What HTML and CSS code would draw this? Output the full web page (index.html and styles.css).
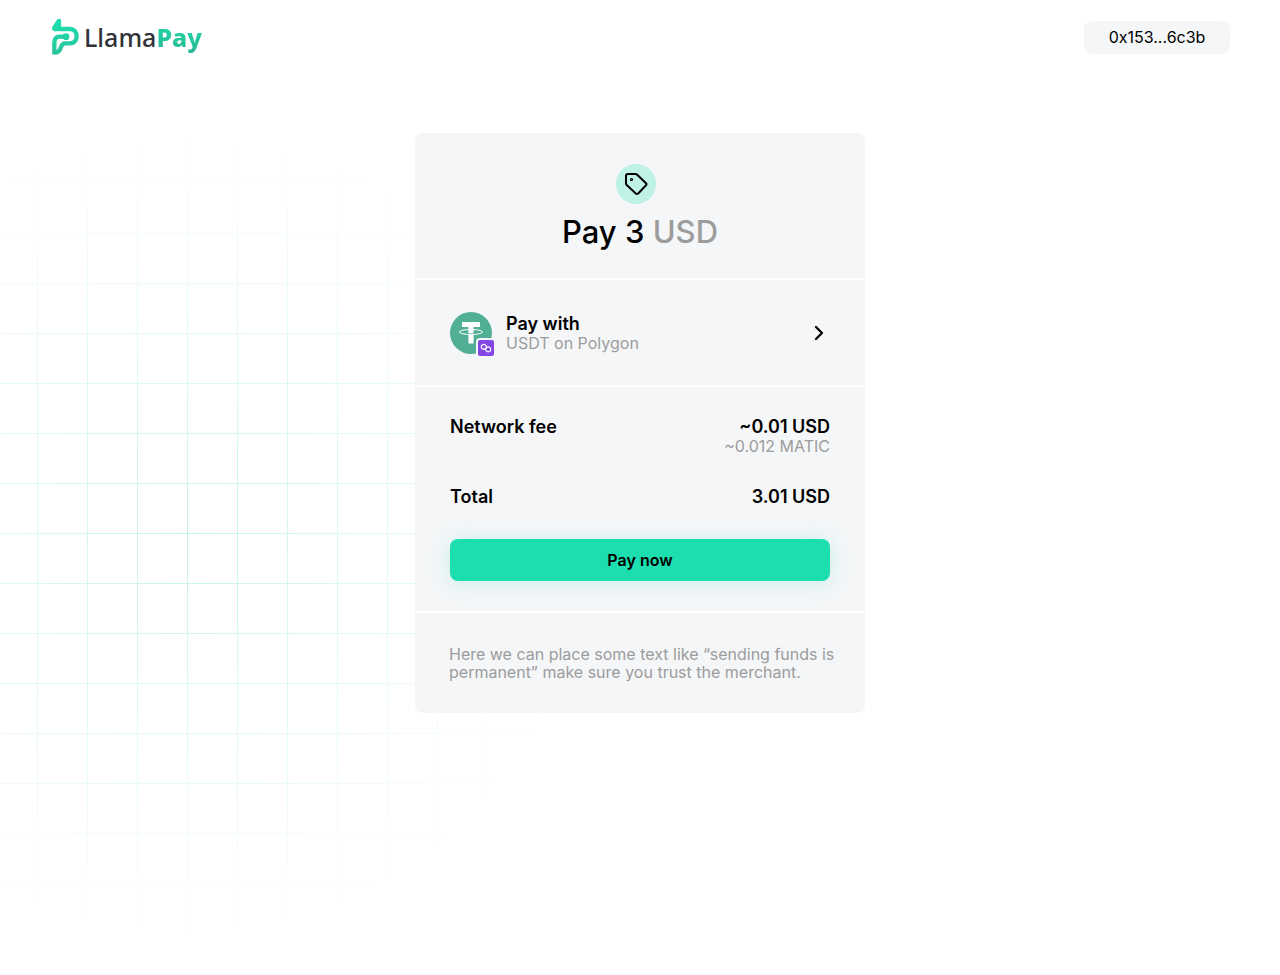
FILE: index.html
```html
<!DOCTYPE html>
<html lang="en">
<head>
<meta charset="utf-8">
<meta name="viewport" content="width=device-width, initial-scale=1">
<title>LlamaPay</title>
<link rel="stylesheet" href="styles.css">
</head>
<body>
<header class="topbar">
  <a class="brand" href="#" aria-label="LlamaPay">
    <svg class="brand-mark" viewBox="21 12 81 108" aria-hidden="true">
      <defs>
        <linearGradient id="mint" x1="0" y1="12" x2="0" y2="120" gradientUnits="userSpaceOnUse">
          <stop offset="0" stop-color="#1be0b0"/><stop offset="1" stop-color="#2bc39b"/>
        </linearGradient>
      </defs>
      <path fill="url(#mint)" d="M21 40Q21 35 26 29L37 13Q42 7 47 13Q49 18 48 36H73V47H26Q21 47 21 40Z"/>
      <path fill="none" stroke="url(#mint)" stroke-width="13" stroke-linejoin="round" d="M27 42H74C88 42 95 52 95 64C95 77 87 85 75 85H60C51 85 50 91 47 99C44 108 37 113 28 113V84C28 70 34 65 44 65H62"/>
      <circle cx="63" cy="65" r="10" fill="url(#mint)"/>
    </svg>
    <span class="brand-name">Llama<b>Pay</b></span>
  </a>
  <button class="account" type="button">0x153...6c3b</button>
</header>
<main class="page">
  <section class="card">
    <div class="summary">
      <span class="tag">
        <svg viewBox="0 0 24 24" width="24" height="24" fill="none" stroke="#000" stroke-width="2" stroke-linejoin="round" aria-hidden="true">
          <path d="M4 2H11.500Q12.500 2 13.200 2.700L22 11.200Q23 12.200 22 13.200L14.200 21.500Q13 22.500 11.800 21.500L2.700 13Q2 12.200 2 11.500V4Q2 2 4 2Z"/>
          <circle cx="7.500" cy="7.500" r=".6"/>
        </svg>
      </span>
      <h1 class="amount">Pay 3 <span class="muted">USD</span></h1>
    </div>
    <button class="method" type="button">
      <span class="token">
        <svg viewBox="0 0 42 42" width="42" height="42" aria-hidden="true">
          <circle cx="21" cy="21" r="21" fill="#50af95"/>
          <ellipse cx="21" cy="20" rx="11.500" ry="2.500" fill="none" stroke="#fff" stroke-width="1"/>
          <path fill="#fff" d="M12 10H30V15H23.600V31.500H18.400V15H12Z"/>
          <path d="M17 21.300Q21 21.800 25 21.300" fill="none" stroke="#50af95" stroke-width=".7"/>
        </svg>
        <svg class="chain" viewBox="0 0 16 16" width="16" height="16" aria-hidden="true">
          <path fill="none" stroke="#fff" stroke-width="1.100" stroke-linejoin="round" stroke-linecap="round" d="M8.200 7.900V5.600L5.700 4.200L3.400 5.500V8.100L5.700 9.400L10.200 6.800L12.600 8.100V10.800L10.200 12.100L7.900 10.800V8.100"/>
        </svg>
      </span>
      <span class="method-text">
        <span class="strong">Pay with</span>
        <span class="sub">USDT on Polygon</span>
      </span>
      <svg class="chevron" viewBox="0 0 24 24" width="24" height="24" fill="none" stroke="#000" stroke-width="2.300" stroke-linecap="round" stroke-linejoin="round" aria-hidden="true"><path d="M10 6l6 6-6 6"/></svg>
    </button>
    <div class="details">
      <dl class="costs">
        <div class="row">
          <dt>Network fee</dt>
          <dd>~0.01 USD<span class="sub">~0.012 MATIC</span></dd>
        </div>
        <div class="row">
          <dt>Total</dt>
          <dd>3.01 USD</dd>
        </div>
      </dl>
      <button class="pay" type="button">Pay now</button>
    </div>
    <p class="note">Here we can place some text like “sending funds is permanent” make sure you trust the merchant.</p>
  </section>
</main>
</body>
</html>
```
FILE: styles.css
```css
* { box-sizing: border-box; }

body {
  position: relative;
  min-height: 100vh;
  margin: 0;
  background: #fff;
  color: #000;
  font-family: Inter, "Liberation Sans", sans-serif;
  font-size: 16px;
}

/* Faded grid behind the card */
body::before {
  content: "";
  position: absolute;
  inset: 0;
  z-index: -1;
  background-image:
    linear-gradient(to right, #c4f5e9 1px, transparent 1px),
    linear-gradient(to bottom, #c4f5e9 1px, transparent 1px);
  background-size: 50px 50px;
  background-position: 37px 33px;
  mask-image: radial-gradient(circle 405px at 188px 536px, #000, transparent);
}

button {
  font: inherit;
  color: inherit;
  border: 0;
  cursor: pointer;
}

.topbar {
  display: flex;
  justify-content: space-between;
  align-items: center;
  height: 74px;
  padding: 0 50px 0 52px;
}

.brand {
  display: flex;
  align-items: center;
  gap: 5px;
  color: #303338;
  text-decoration: none;
}

.brand-mark { width: 27px; height: 36px; }

.brand-name {
  font-family: "Noto Sans", sans-serif;
  font-size: 25px;
  font-weight: 500;
  line-height: 32px;
}

.brand-name b {
  color: transparent;
  background: linear-gradient(#1bd9ab, #2bb894);
  background-clip: text;
  font-weight: 800;
}

.account {
  width: 146px;
  height: 33px;
  padding: 0;
  border-radius: 8px;
  background: #f4f6f8;
}

.page {
  display: flex;
  justify-content: center;
  padding: 59px 16px;
}

.card {
  width: 100%;
  max-width: 450px;
  padding: 0 1px;
  border-radius: 8px;
  background: #f4f6f8;
}

.summary {
  display: flex;
  flex-direction: column;
  align-items: center;
  padding: 31px 34px 26px;
}

.tag {
  display: grid;
  place-items: center;
  width: 40px;
  height: 40px;
  margin-right: 8px;
  border-radius: 50%;
  background: #bff1e4;
}

.amount {
  margin: 8px 0 0;
  font-size: 31px;
  font-weight: 500;
  line-height: 40px;
}

.muted, .sub, .note { color: #9c9c9c; }

.method {
  display: flex;
  align-items: center;
  gap: 14px;
  width: 100%;
  height: 109px;
  padding: 0 34px;
  border: solid #fff;
  border-width: 2px 0;
  background: none;
  text-align: left;
}

.token {
  position: relative;
  display: flex;
}

.chain {
  position: absolute;
  right: -4px;
  bottom: -4px;
  box-sizing: content-box;
  border: 2px solid #f4f6f8;
  border-radius: 4px;
  background: #8247e5;
}

.method-text { flex: 1; }

.strong, dt, dd {
  font-size: 18px;
  font-weight: 600;
  line-height: 20px;
}

.strong, .sub { display: block; }

.sub {
  font-size: 16px;
  font-weight: 400;
  line-height: 18px;
}

.details {
  padding: 30px 34px;
  border-bottom: 2px solid #fff;
}

.costs {
  display: grid;
  gap: 32px;
  margin: 0 0 32px;
}

.row {
  display: flex;
  justify-content: space-between;
}

dd { margin: 0; text-align: right; }

.pay {
  display: block;
  width: 100%;
  height: 42px;
  border-radius: 8px;
  background: #1ddeae;
  box-shadow: 0 2px 20px rgba(29, 222, 174, .2);
  font-weight: 600;
}

.note {
  margin: 0;
  padding: 32px 24px 32px 33px;
  line-height: 18px;
}
```
